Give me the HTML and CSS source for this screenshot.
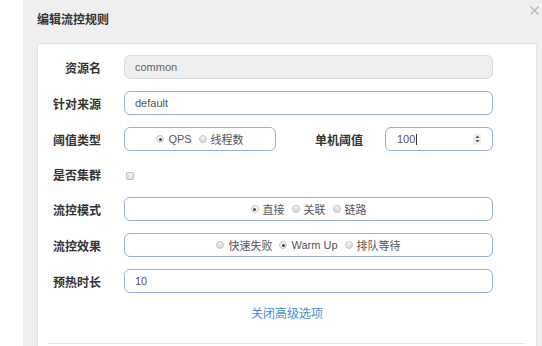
FILE: index.html
```html
<!DOCTYPE html>
<html lang="zh-CN">
    <head>
        <meta charset="UTF-8">
        <title>编辑流控规则</title>
        <link rel="stylesheet" href="styles.css">
    </head>
    <body>
        <div class="page">
            <div class="gutter"></div>
            <div class="modal">
                <div class="modal-header">
                    <h4 class="modal-title">编辑流控规则</h4>
                    <span class="close">
                        <svg width="9" height="9" viewBox="0 0 9 9"><path d="M0.5 0.5 L8.5 8.5 M8.5 0.5 L0.5 8.5" stroke="#b5b5b5" stroke-width="1.2"/></svg>
                    </span>
                </div>

                <div class="card">
                    <div class="row">
                        <label class="row-label">资源名</label>
                        <div class="field disabled">common</div>
                    </div>

                    <div class="row">
                        <label class="row-label">针对来源</label>
                        <div class="field">default</div>
                    </div>

                    <div class="row">
                        <label class="row-label">阈值类型</label>
                        <div class="inline">
                            <div class="field radios narrow">
                                <span class="radio checked"></span><span class="opt">QPS</span>
                                <span class="radio"></span><span class="opt">线程数</span>
                            </div>
                            <label class="row-label side">单机阈值</label>
                            <div class="field number">
                                <span>100</span><span class="caret"></span>
                                <span class="spin">
                                    <svg width="5" height="8" viewBox="0 0 5 8"><path d="M2.5 0.5 L4.5 3 L0.5 3 Z M2.5 7.5 L4.5 5 L0.5 5 Z" fill="#555"/></svg>
                                </span>
                            </div>
                        </div>
                    </div>

                    <div class="row short">
                        <label class="row-label">是否集群</label>
                        <div><span class="checkbox"></span></div>
                    </div>

                    <div class="row">
                        <label class="row-label">流控模式</label>
                        <div class="field radios">
                            <span class="radio checked"></span><span class="opt">直接</span>
                            <span class="radio"></span><span class="opt">关联</span>
                            <span class="radio"></span><span class="opt">链路</span>
                        </div>
                    </div>

                    <div class="row">
                        <label class="row-label">流控效果</label>
                        <div class="field radios">
                            <span class="radio"></span><span class="opt">快速失败</span>
                            <span class="radio checked"></span><span class="opt">Warm Up</span>
                            <span class="radio"></span><span class="opt">排队等待</span>
                        </div>
                    </div>

                    <div class="row">
                        <label class="row-label">预热时长</label>
                        <div class="field">10</div>
                    </div>

                    <div class="advanced">
                        <a href="#">关闭高级选项</a>
                    </div>

                    <div class="divider"></div>
                </div>
            </div>
        </div>
    </body>
</html>
```

FILE: styles.css
```css
body {
    margin: 0;
    padding: 0;
    background-color: #fff;
    font-family: "Liberation Sans", "Noto Sans CJK SC", sans-serif;
    color: #333;
}

.page {
    display: flex;
    height: 346px;
    overflow: hidden;
}

.gutter {
    width: 23px;
    flex-shrink: 0;
}

.modal {
    position: relative;
    flex: 1;
    background-color: #efefef;
    padding: 0 5px 0 14px;
    display: flex;
    flex-direction: column;
}

.modal-header {
    height: 43px;
    display: flex;
    align-items: center;
    padding-bottom: 6px;
    box-sizing: border-box;
}

.modal-title {
    margin: 0;
    font-size: 12px;
    font-weight: bold;
    color: #333;
}

.close {
    position: absolute;
    top: 6px;
    right: 3px;
    line-height: 0;
}

.card {
    flex: 1;
    background-color: #fff;
    border: 1px solid #e3e3e3;
    border-bottom: none;
    border-radius: 3px 3px 0 0;
    padding: 11px 43px 0 0;
}

.row {
    display: grid;
    grid-template-columns: 63px 1fr;
    column-gap: 23px;
    align-items: center;
    height: 24px;
    margin-bottom: 12px;
}

.row.short {
    height: 22px;
}

.row-label {
    text-align: right;
    font-size: 12px;
    font-weight: bold;
    color: #333;
    white-space: nowrap;
}

.field {
    height: 24px;
    box-sizing: border-box;
    border: 1px solid #93afcb;
    border-radius: 6px;
    padding: 0 10px;
    display: flex;
    align-items: center;
    font-size: 11px;
    color: #555;
}

.field.disabled {
    background-color: #eee;
    border-color: #dcdcdc;
    color: #666;
}

.inline {
    display: flex;
    align-items: center;
}

.narrow {
    width: 152px;
    flex-shrink: 0;
}

.side {
    width: 87px;
    margin-right: 22px;
}

.number {
    width: 108px;
    flex-shrink: 0;
    padding-left: 11px;
}

.caret {
    width: 1px;
    height: 11px;
    background-color: #333;
    margin-left: 1px;
}

.spin {
    margin-left: auto;
    margin-right: 1px;
    width: 8px;
    height: 11px;
    background-color: #f0f0f0;
    display: flex;
    align-items: center;
    justify-content: center;
}

.radios {
    justify-content: center;
}

.radio {
    width: 8px;
    height: 8px;
    box-sizing: border-box;
    border: 1px solid #c4c4c4;
    border-radius: 50%;
    background: linear-gradient(#f4f4f4, #d9d9d9);
    margin-right: 4px;
    display: flex;
    align-items: center;
    justify-content: center;
}

.radio.checked {
    background: #f4f4f4;
}

.radio.checked::after {
    content: "";
    width: 3px;
    height: 3px;
    border-radius: 50%;
    background-color: #444;
}

.opt {
    margin-right: 7px;
    font-size: 11px;
    color: #555;
}

.opt:last-child {
    margin-right: 0;
}

.checkbox {
    display: block;
    width: 8px;
    height: 8px;
    box-sizing: border-box;
    border: 1px solid #bdbdbd;
    border-radius: 2px;
    background: linear-gradient(#f6f6f6, #dedede);
    margin: 3px 0 0 2px;
}

.advanced {
    text-align: center;
    margin-top: 2px;
    margin-right: -43px;
    line-height: 16px;
}

.advanced a {
    font-size: 12px;
    color: #4b8dcb;
    text-decoration: none;
}

.divider {
    height: 1px;
    background-color: #e8e8e8;
    margin: 21px -33px 0 10px;
}
```
